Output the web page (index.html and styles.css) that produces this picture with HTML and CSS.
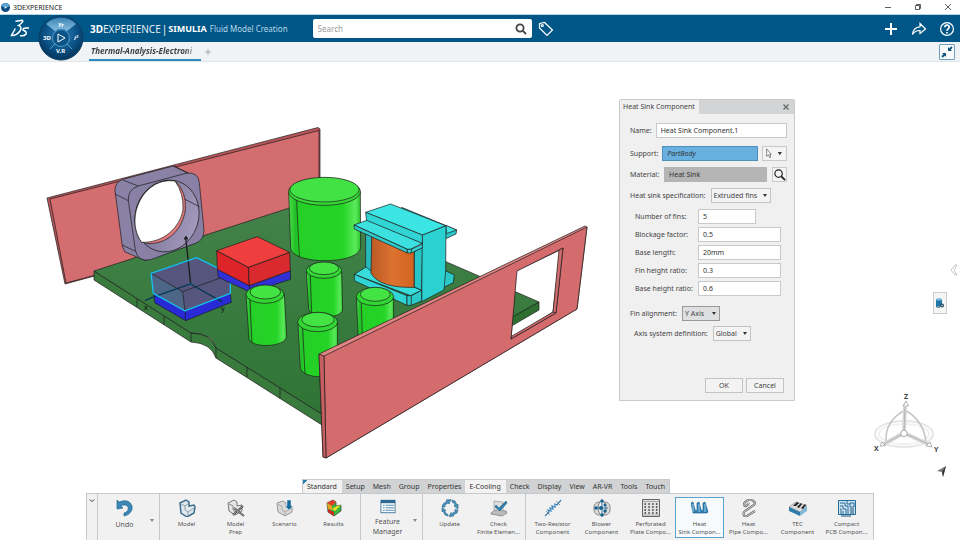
FILE: index.html
```html
<!DOCTYPE html>
<html lang="en">
<head>
    <meta charset="UTF-8">
    <meta name="viewport" content="width=device-width, initial-scale=1.0">
    <title>3DEXPERIENCE</title>
    <link rel="stylesheet" href="styles.css">
</head>
<body>
    <header class="titlebar">
        <svg class="app-icon" viewBox="0 0 10 10"><circle cx="5" cy="5" r="5" fill="#0b4d82"/><path d="M1 4a4 4 0 0 1 8 0L5 5z" fill="#5da7d6"/><path d="M4 3.5v3L7 5z" fill="#d5ecfa"/></svg>
        <span class="app-name">3DEXPERIENCE</span>
        <div class="window-buttons">
            <button aria-label="Minimize"><svg viewBox="0 0 8 8"><path d="M1 4.500h6"/></svg></button>
            <button aria-label="Restore"><svg viewBox="0 0 8 8"><path d="M1.500 2.500h4v4h-4zM2.500 2.500v-1h4v4h-1"/></svg></button>
            <button aria-label="Close"><svg viewBox="0 0 8 8"><path d="M1 1l6 6M7 1L1 7"/></svg></button>
        </div>
    </header>

    <nav class="topbar">
        <svg class="ds-logo" viewBox="0 0 20 20"><path d="M6 2.200L12 1.200Q14.500 2.500 8.500 6.500Q12.500 7.500 10 12Q6.500 16.700 1.500 16.500L5 10M18.500 9Q12.500 8.500 13 11Q17.500 13 16 15Q14.500 17.300 10.500 16.700" fill="none" stroke="#fff" stroke-width="1.500" stroke-linecap="round"/></svg>
        <div class="brand"><span><b>3D</b>EXPERIENCE</span><span class="bar">|</span><b class="product">SIMULIA</b></div>
        <div class="app-title">Fluid Model Creation</div>
        <div class="search">
            <input type="text" placeholder="Search" aria-label="Search">
            <button aria-label="Run search"><svg viewBox="0 0 12 12"><circle cx="5" cy="5" r="3.600"/><path d="M7.700 7.700L11 11"/></svg></button>
        </div>
        <button class="tag" aria-label="Tags"><svg viewBox="0 0 16 16"><path d="M1.500 2.500l5-1L14.500 9 9 14.500 1.500 7z"/><circle cx="4.300" cy="4.500" r="1"/></svg></button>
        <div class="actions">
            <button aria-label="Add"><svg viewBox="0 0 16 16"><path d="M8 2v12M2 8h12" stroke-width="2"/></svg></button>
            <button aria-label="Share"><svg viewBox="0 0 16 16"><path d="M1.500 13.500C2 8.500 4.500 6 9 5.800V2.500L14.500 8 9 12.500V9.500C6 9.300 3.500 10.500 1.500 13.500z"/></svg></button>
            <button aria-label="Help"><svg viewBox="0 0 16 16"><circle cx="8" cy="8" r="6.400"/><path d="M5.800 6.300c.2-3 4.600-2.700 4.400 0C10 8 8 7.800 8 9.800M8 11v1.500" stroke-width="1.700"/></svg></button>
        </div>
        <button class="compass" aria-label="Compass">
            <svg viewBox="0 0 46 46">
                <defs>
                    <radialGradient id="ball" cx=".5" cy=".4" r=".6"><stop offset="0" stop-color="#2b7fb5"/><stop offset=".6" stop-color="#0c5389"/><stop offset="1" stop-color="#043459"/></radialGradient>
                    <linearGradient id="gloss" x1="0" y1="0" x2="0" y2="1"><stop offset="0" stop-color="#3c84b4"/><stop offset="1" stop-color="#85bfe0"/></linearGradient>
                </defs>
                <circle cx="23" cy="23" r="22" fill="url(#ball)" stroke="#0a3e66"/>
                <path d="M8 9A21 21 0 0 1 38 9L29 16a9 9 0 0 0-12 0z" fill="url(#gloss)"/>
                <path d="M12 34l5-5M34 34l-5-5" stroke="#5ba0cb"/>
                <circle cx="23" cy="23" r="8.500" fill="#0c5488" stroke="#5199c6"/>
                <path d="M20 19v8l7-4z" fill="none" stroke="#fff"/>
                <text x="5" y="25">3D</text><text x="20" y="12" class="slant">Yr</text><text x="36" y="25" class="slant">i²</text><text x="18" y="38">V.R</text>
            </svg>
        </button>
    </nav>

    <div class="doc-tabs">
        <a class="doc-tab" href="#">Thermal-Analysis-Electroni</a>
        <button class="new-tab" aria-label="New tab"><svg viewBox="0 0 8 8"><path d="M4 1v6M1 4h6" stroke="#aaa"/></svg></button>
        <button class="collapse" aria-label="Collapse"><svg viewBox="0 0 14 14"><path d="M8 2v4h4zM2 8h4v4z" fill="#15547f"/><path d="M12 2L9 5M2 12l3-3" stroke="#15547f" stroke-width="1.800"/></svg></button>
    </div>

    <main class="workspace">
        <svg class="scene" viewBox="0 62 960 478" preserveAspectRatio="xMinYMin meet" role="img" aria-label="Electronics board">
            <defs>
                <linearGradient id="can"><stop offset="0" stop-color="#4be04a"/><stop offset=".1" stop-color="#21bd25"/><stop offset=".14" stop-color="#25cf27"/><stop offset=".75" stop-color="#24d426"/><stop offset=".93" stop-color="#5ae95a"/><stop offset="1" stop-color="#27c42b"/></linearGradient>
                <linearGradient id="board" x1="0" y1="0" x2="0" y2="1"><stop offset="0" stop-color="#43824a"/><stop offset="1" stop-color="#2f7435"/></linearGradient>
                <linearGradient id="bore"><stop offset="0" stop-color="#746d91"/><stop offset="1" stop-color="#a29abc"/></linearGradient>
                <linearGradient id="coil"><stop offset="0" stop-color="#bb5a25"/><stop offset=".5" stop-color="#dc7230"/><stop offset="1" stop-color="#d36220"/></linearGradient>
            </defs>

            <!-- rear wall -->
            <g class="edge">
                <path d="M47 198L318 127.500 320 129V215L65 284z" fill="#b95559"/>
                <path d="M50 199L319 130.500V215L66 283z" fill="#d46d6f"/>
            </g>

            <!-- board -->
            <g class="edge">
                <path d="M94 271L191 333Q211 333 216 348L322 414V425L216 358Q211 343 191 342L94 280z" fill="#397a3d"/>
                <path d="M539 302V310L450 362V350z" fill="#2f6f32"/>
                <path d="M94 271L308 202 539 302 340 414H322L216 348Q213 333 191 333z" fill="url(#board)"/>
                <path d="M137 299v8M164 316v9M191 333v9M216 348v10M247 367v10M280 388v11" fill="none"/>
            </g>

            <!-- fan -->
            <g class="edge detail" transform="translate(30 110) scale(.3333)">
                <path d="M255 242Q254 218 278 208L430 168 476 189 500 398 345 452 284 425 277 408z" fill="#8982a6"/>
                <path d="M295 272Q292 240 325 228L468 190Q505 184 508 218L522 360Q522 390 497 400L362 449Q323 457 316 420z" fill="#8881a5"/>
                <ellipse cx="411" cy="318" rx="95" ry="109" transform="rotate(18 411 318)" fill="url(#bore)"/>
                <path d="M335 397C300 350 312 275 360 234Q393 207 435 213Q471 245 466 300C458 354 420 400 358 401z" fill="#e17a7c"/>
                <path d="M335 397C300 350 312 275 360 234Q393 207 435 213Q462 250 459 300C449 354 400 399 335 397z" fill="#fff"/>
                <path d="M278 210L325 228M430 168L472 189M255 252L295 272M277 405L316 424M465 268L508 290" fill="none"/>
            </g>

            <!-- selected chip -->
            <g class="edge detail" transform="translate(30 110) scale(.3333)">
                <path d="M371 550L465 603 601 550 604 577 467 632 374 578z" fill="#2929d5"/>
                <path d="M466 603V632" fill="none"/>
                <path d="M363 490L500 443 601 493V550L465 603 370 550z" fill="#56557d"/>
                <path d="M363 490L458 545 465 603 370 550z" fill="#4d6687" stroke="none"/>
                <path d="M363 490L458 545 601 493M458 545L465 603" fill="none"/>
                <path d="M482 522L367 562 345 572M482 522L575 575M568 568l8 8" fill="none" stroke-width="4" stroke="#063755"/>
                <path d="M482 522L467 380M463 388l5-8 5 8" fill="none" stroke-width="4"/>
                <circle cx="482" cy="522" r="4" fill="#0b5272" stroke="none"/>
                <path d="M363 490L500 443 601 493V550L465 603 370 550z" fill="none" stroke="#16c3f4" stroke-width="4"/>
            </g>
            <text class="axis-name" x="144" y="310">x</text>
            <text class="axis-name" x="221" y="311">y</text>

            <g class="edge detail" transform="translate(220 160) scale(.3333)">
                <!-- red chip -->
                <path d="M-8 325L88 377 211 332 212 358 92 397-5 352z" fill="#3030d6"/>
                <path d="M-10 272L85 322 88 377-8 328z" fill="#dc2429"/>
                <path d="M85 322L209 277 211 332 88 377z" fill="#d92b2f"/>
                <path d="M-10 272L112 230 209 277 85 322z" fill="#ee3f3e"/>
                <path d="M88 377L92 397" fill="none"/>
                <!-- large capacitor -->
                <path d="M206 96L212 265C218 315 415 315 422 263L421 96z" fill="url(#can)"/>
                <ellipse cx="313.500" cy="95" rx="108" ry="41" fill="#35d936"/>
                <ellipse cx="313.500" cy="89" rx="104" ry="37" fill="#43e244"/>
                <path d="M230 122L238 290" fill="none"/>
                <!-- transformer -->
                <path d="M545 142L710 210 708 222 680 235 600 200z" fill="#2ccaca"/>
                <path d="M677 196L710 210 680 221z" fill="#44e4e2"/>
                <path d="M678 333L703 345 700 368 660 388 660 350z" fill="#2cc9c9"/>
                <path d="M403 343L440 320 605 391 572 407z" fill="#37dcdb"/>
                <path d="M437 222L460 230V338L437 320z" fill="#27b9bb"/>
                <path d="M455 228L583 275V382Q480 385 453 340z" fill="url(#coil)"/>
                <path d="M583 275L608 262 605 391 583 381z" fill="#27c5c5"/>
                <path d="M607 225L678 197 677 335 672 390 605 425z" fill="#2bd1d1"/>
                <path d="M403 343L561 407V436L403 362z" fill="#32d5d5"/>
                <path d="M561 407H574L605 391V423L574 436H561zM574 407V436" fill="#2cc9c9"/>
                <path d="M437 157L512 132 677 197 607 225z" fill="#3be5e3"/>
                <path d="M437 157L607 225V251L440 183z" fill="#31d4d4"/>
                <path d="M402 195L440 181 607 250 572 268H562z" fill="#3be0df"/>
                <path d="M402 195L562 268V279L403 207z" fill="#2ecaca"/>
                <path d="M562 268H574L607 252V263L574 279H562zM574 268V279" fill="#34d3d3"/>
                <!-- small capacitors -->
                <path d="M259 335L266 448C275 478 360 478 368 450L365 335z" fill="url(#can)"/>
                <ellipse cx="312" cy="331" rx="53" ry="24" fill="#31d833"/>
                <ellipse cx="312" cy="325" rx="44" ry="19" fill="#43e344"/>
                <path d="M271 346L275 462" fill="none"/>
                <path d="M409 412L415 535H521V412z" fill="url(#can)"/>
                <ellipse cx="465" cy="410" rx="56" ry="27" fill="#31d833"/>
                <ellipse cx="466" cy="403" rx="45" ry="21" fill="#43e344"/>
                <path d="M424 430L427 530" fill="none"/>
                <path d="M78 402L87 538C98 565 193 563 200 530L193 402z" fill="url(#can)"/>
                <ellipse cx="135" cy="403" rx="57" ry="27" fill="#31d833"/>
                <ellipse cx="136" cy="396" rx="46" ry="21" fill="#43e344"/>
                <path d="M90 418L96 549" fill="none"/>
                <path d="M234 488L241 625C250 657 342 660 353 625V488z" fill="url(#can)"/>
                <ellipse cx="293" cy="486" rx="60" ry="29" fill="#31d833"/>
                <ellipse cx="294" cy="479" rx="49" ry="22" fill="#43e344"/>
                <path d="M248 505L255 642" fill="none"/>
            </g>

            <!-- front wall with cut-out -->
            <g class="edge">
                <path d="M319 354L585 226 587 227 577 309 326 458 323 457zM516 271L511 339 553 312 560 250z" fill="#e08484" fill-rule="evenodd"/>
                <path d="M324 356L587 227 577 309 326 458zM517 271L511 339 556 313 563 248z" fill="#d46b6d" fill-rule="evenodd"/>
                <path d="M319 354L324 356 326 458 323 457z" fill="#c65f62"/>
                <path d="M559 250L563 248 556 313 511 339 512 336 553 312z" fill="#cf6a6d"/>
                <path d="M553 312L556 313" fill="none"/>
            </g>
        </svg>

        <section class="dialog" aria-labelledby="dialog-title">
            <div class="dialog-head">
                <h2 id="dialog-title">Heat Sink Component</h2>
                <button class="close" aria-label="Close dialog"><svg viewBox="0 0 8 8"><path d="M1.500 1.500l5 5M6.500 1.500l-5 5"/></svg></button>
            </div>
            <form class="dialog-body">
                <div class="row name">
                    <label for="name">Name:</label>
                    <input id="name" type="text" value="Heat Sink Component.1">
                </div>
                <div class="row support">
                    <label for="support">Support:</label>
                    <input id="support" type="text" value="PartBody" readonly>
                    <button type="button" class="pick" aria-label="Pick support"><svg viewBox="0 0 25 14"><path d="M4 2v8l2-1.500 1.200 3 1.300-.6L7.300 8H9z" fill="#fff" stroke="#444" stroke-width=".7"/><path d="M16 5.500h4.500l-2.200 3.500z" fill="#333"/></svg></button>
                </div>
                <div class="row material">
                    <label for="material">Material:</label>
                    <input id="material" type="text" value="Heat Sink" readonly>
                    <button type="button" class="browse" aria-label="Browse materials"><svg viewBox="0 0 14 14"><circle cx="6" cy="6" r="4"/><path d="M9 9l4 4" stroke-width="2"/></svg></button>
                </div>
                <div class="row">
                    <label for="spec">Heat sink specification:</label>
                    <span class="select wide"><select id="spec"><option>Extruded fins</option></select></span>
                </div>
                <div class="params">
                    <label for="fins">Number of fins:</label>
                    <input id="fins" class="short" type="text" value="5">
                    <label for="blockage">Blockage factor:</label>
                    <input id="blockage" type="text" value="0.5">
                    <label for="length">Base length:</label>
                    <input id="length" type="text" value="20mm">
                    <label for="fin-ratio">Fin height ratio:</label>
                    <input id="fin-ratio" type="text" value="0.3">
                    <label for="base-ratio">Base height ratio:</label>
                    <input id="base-ratio" type="text" value="0.6">
                </div>
                <div class="row alignment">
                    <label for="align">Fin alignment:</label>
                    <span class="select"><select id="align"><option>Y Axis</option></select></span>
                </div>
                <div class="row axis-system">
                    <label for="axis">Axis system definition:</label>
                    <span class="select"><select id="axis"><option>Global</option></select></span>
                </div>
                <div class="dialog-buttons">
                    <button type="button">OK</button>
                    <button type="button">Cancel</button>
                </div>
            </form>
        </section>

        <button class="side-arrow" aria-label="Show panel"><svg viewBox="0 0 8 12"><path d="M5 1L1 6l4 5h2L4 6l3-5z" fill="#fff" stroke="#aaa" stroke-width=".7"/></svg></button>
        <button class="side-tool" aria-label="Data"><svg viewBox="0 0 10 12"><path d="M1 2.500h6v7H1z" fill="#2377a8"/><ellipse cx="4" cy="2.500" rx="3" ry="1.200" fill="#72b6dc"/><path d="M1 9.500q3 1.500 4 .5" stroke="#17577f" fill="none"/><circle cx="7" cy="8.500" r="2" fill="#24495f"/><circle cx="7" cy="8.500" r=".7" fill="#fff"/></svg></button>

        <svg class="triad" viewBox="870 390 80 92" role="img" aria-label="View orientation">
            <g fill="none" stroke="#e6e6e6" stroke-width="2">
                <ellipse cx="904" cy="434" rx="29" ry="13"/>
                <ellipse cx="904" cy="434" rx="25" ry="10" stroke="#f1f1f1"/>
            </g>
            <path d="M886 441Q885 421 905 410Q924 421 926 442" fill="none" stroke="#c4c4c4" stroke-width="1.500"/>
            <g stroke="#d8d8d8" stroke-width="4"><path d="M905 407L904 433M884 444L904 433L928 444" fill="none"/></g>
            <path d="M905 407L904 433M884 444L904 433L928 444" fill="none" stroke="#b4b4b4"/>
            <g fill="#fff" stroke="#999" stroke-width=".8"><path d="M906 401l-3 5h5.500zM880 446l2-4 3.500 3.500zM932 447l-2-5-4 4z"/><circle cx="904" cy="433.500" r="3.200"/></g>
            <path d="M946 466l-9 5 5 1 1 5z" fill="#777"/><path d="M946 466l-4 6 1 5z" fill="#333"/>
            <text x="904" y="399">Z</text><text x="874" y="451">X</text><text x="934" y="452">Y</text>
        </svg>

        <div class="action-bar">
            <div class="sections">
                <button class="active first">Standard</button><button>Setup</button><button>Mesh</button><button>Group</button><button>Properties</button><button class="active">E-Cooling</button><button>Check</button><button>Display</button><button>View</button><button>AR-VR</button><button>Tools</button><button>Touch</button>
            </div>
            <div class="tools">
                <button class="handle" aria-label="Hide action bar"><svg viewBox="0 0 8 8"><path d="M1.500 2.500L4 4.500l2.500-2" fill="none" stroke="#555"/></svg></button>
                <div class="group">
                    <button class="tool large"><svg viewBox="0 0 18 18"><path d="M1 1l2 2q10-4 13 4c1 5-3 9-8 10v-3c5-1 6-7 1-8-2 0-3 0-4 1l2 2-6 1z" fill="#3a88b7" stroke="#27648b" stroke-width=".7"/></svg><span>Undo</span></button>
                    <button class="more" aria-label="More undo actions"></button>
                </div>
                <div class="group">
                    <button class="tool"><svg viewBox="0 0 18 18"><path d="M2 4l6-3 3 2v4l5-1 1 2-1 6-7 4-6-4z" fill="#e1e7eb" stroke="#3c6f8f" stroke-width="1.500"/><path d="M3 5l4 2v4l3 2 6-4M7 7l4-3M10 13v4" fill="none" stroke="#78909e" stroke-width=".8"/></svg><span>Model</span></button>
                    <button class="tool"><svg viewBox="0 0 18 18"><path d="M1 4l6-3 3 2v4l5-1v6l-7 4-6-4z" fill="#e5e5e5" stroke="#777"/><path d="M2 5l4 2v4l3 2 6-4" fill="none" stroke="#888"/><path d="M7 9l10 8M16 7L6 16" stroke="#444" stroke-width="2"/><path d="M7 9l10 8M16 7L6 16" stroke="#a7b5bd" stroke-width=".8"/></svg><span>Model<br>Prep</span></button>
                    <button class="tool"><svg viewBox="0 0 18 18"><path d="M1 4l6-2 3 2v4l6-1v6l-7 4-7-4z" fill="#d9d9d9" stroke="#999"/><path d="M1 5l5 2v4l3 2 7-4M9 13v4" fill="none" stroke="#aaa"/><path d="M11 1h4v6h2l-4 4-4-4h2z" fill="#176c9d" stroke="#dcedf6" stroke-width=".5"/></svg><span>Scenario</span></button>
                    <button class="tool"><svg viewBox="0 0 18 18"><path d="M2 4l6-3 3 2v4l5-1v6l-7 5-6-4z" fill="#38b53c" stroke="#344" stroke-width=".7"/><path d="M2 4l6-3 3 2-4 4z" fill="#e5392a"/><path d="M2 4l5 3v4l-4-1z" fill="#e9a21f"/><path d="M3 10l6 3v4l-6-4z" fill="#ce2620"/><path d="M7 10l5-3 4-1-6 6z" fill="#efdd25"/></svg><span>Results</span></button>
                </div>
                <div class="group">
                    <button class="tool large"><svg viewBox="0 0 18 18"><path d="M0 1h18v16H0z" fill="#2c6a91"/><path d="M1 5h16v11H1z" fill="#f8fbfc"/><path d="M3 7.500h2M6 7.500h10M3 10.500h2M6 10.500h10M3 13.500h2M6 13.500h10" stroke="#397ba2"/></svg><span>Feature<br>Manager</span></button>
                    <button class="more" aria-label="More features"></button>
                </div>
                <div class="group">
                    <button class="tool"><svg viewBox="0 0 18 18"><g fill="#4892bb" stroke="#2b6587" stroke-width=".6"><path d="M1 8l1-3 4-3-1-1 5-.5L8 5 7 4 4 6v2z"/><path d="M11 1l3 1 2 4 1-1v5l-4-3 1-1-1-2-2-1z"/><path d="M17 11l-1 3-4 2 1 1-5 .5 2-4 1 1 3-2v-2z"/><path d="M7 17l-3-1-2-4-1 1V8.500l4 3-1 1 1 2 2 1z"/></g></svg><span>Update</span></button>
                    <button class="tool"><svg viewBox="0 0 18 18"><path d="M1 14l4-3 11 1 1 2-5 3-11-2z" fill="#bcbcbc" stroke="#777" stroke-width=".7"/><path d="M4 2l9 1v9l-9-1z" fill="#ddd" stroke="#999" stroke-width=".7"/><path d="M6 6l3 3 7-7 1 2-7 8-5-4z" fill="#2e80b2" stroke="#195275" stroke-width=".5"/></svg><span>Check<br>Finite Elemen...</span></button>
                </div>
                <div class="group">
                    <button class="tool"><svg viewBox="0 0 18 18"><path d="M1 17l4-4-1-2 3 1-1-3 3 1-1-3 3 1 0-3 2 1 4-5" fill="none" stroke="#3b8abb" stroke-width="1.300"/><path d="M2 12l4 4M12 2l4 4" stroke="#777" stroke-width=".8"/></svg><span>Two-Resistor<br>Component</span></button>
                    <button class="tool"><svg viewBox="0 0 18 18"><rect x="1" y="3" width="16" height="13" rx="5" fill="#ddd" stroke="#888"/><ellipse cx="9" cy="9" rx="4" ry="7" fill="#eee" stroke="#777"/><path d="M9 1v16M2 9h13" stroke="#347ba6"/><g fill="#166291"><circle cx="9" cy="2" r="1.700"/><circle cx="3" cy="9" r="1.700"/><circle cx="8" cy="9" r="2"/><circle cx="12" cy="12" r="1.700"/><circle cx="9" cy="16" r="1.700"/><circle cx="12" cy="6" r="1.500"/></g></svg><span>Blower<br>Component</span></button>
                    <button class="tool"><svg viewBox="0 0 18 18"><path d="M.500.500h17v17H.500z" fill="#e2e2e2" stroke="#666"/><path d="M1 2.500h16M1 16h16" stroke="#aaa"/><path d="M2.500 5h14M2.500 8h14M2.500 11h14M2.500 14h14" stroke="#333" stroke-width="1.500" stroke-dasharray="1.500 2.300"/></svg><span>Perforated<br>Plate Compo...</span></button>
                    <button class="tool selected"><svg viewBox="0 0 18 18"><path d="M0 4l2-1 2 8 2 1 0-8 2-1 2 8 2 1V4l2-1 3 10-1 1H2z" fill="#3084b8" stroke="#14547d" stroke-width=".6"/><path d="M2 5v8M8 5v8M14 5v8" stroke="#9ccbe6"/></svg><span>Heat<br>Sink Compon...</span></button>
                    <button class="tool"><svg viewBox="0 0 18 18"><g fill="none"><path d="M4 6C4 3 7 1 10 1c4 0 6 3 4 5L5 12c-3 3-1 6 2 5l8-5M4 6c1 2 3 1 5-2" stroke="#666" stroke-width="2.200"/><path d="M4 6C4 3 7 1 10 1c4 0 6 3 4 5L5 12c-3 3-1 6 2 5l8-5M4 6c1 2 3 1 5-2" stroke="#ddd" stroke-width=".9"/></g></svg><span>Heat<br>Pipe Compo...</span></button>
                    <button class="tool"><svg viewBox="0 0 18 18"><path d="M0 8l7-5 11 4-7 6z" fill="#ddd" stroke="#777" stroke-width=".6"/><path d="M0 8l11 5v4L0 12z" fill="#2b7cac"/><path d="M11 13l7-6v5l-7 5z" fill="#81b9d8"/><path d="M4 7l4-4 2 1-3 3zM8 8l4-4 1 1-3 4zM12 9l4-4 1 1-3 4z" fill="#222"/></svg><span>TEC<br>Component</span></button>
                    <button class="tool"><svg viewBox="0 0 18 18"><path d="M.500 1.500h17v14H.500z" fill="#cfe3ef" stroke="#236b98"/><path d="M2 4h5v3h3v8M2 7h3v3h3v5M2 10h1v5M5 12v3M9 2v3h3" fill="none" stroke="#236b98"/><path d="M12 4h4v4h-4z" fill="none" stroke="#236b98"/><path d="M12 10h4M12 12h4M12 14h4M3 17h10" stroke="#14547d"/></svg><span>Compact<br>PCB Compon...</span></button>
                </div>
            </div>
        </div>
    </main>
</body>
</html>
```
FILE: styles.css
```css
* {
    margin: 0;
    padding: 0;
    box-sizing: border-box;
    font-family: "Noto Sans", sans-serif;
}

body {
    display: flex;
    flex-direction: column;
    height: 100vh;
    overflow: hidden;
    background: #fff;
    color: #444;
    font-size: 7px;
}

button {
    border: none;
    background: none;
    color: inherit;
    font-size: inherit;
}

button svg {
    display: block;
}

/* window title */
.titlebar {
    display: flex;
    align-items: center;
    height: 14px;
    padding: 0 8px 0 1px;
    gap: 3px;
    color: #222;
}

.app-icon {
    width: 9px;
    height: 9px;
}

.window-buttons {
    display: flex;
    gap: 22px;
    margin-left: auto;
}

.window-buttons svg,
.close svg {
    width: 8px;
    height: 8px;
    fill: none;
    stroke: #333;
    stroke-width: 0.8;
}

/* top bar */
.topbar {
    position: relative;
    display: flex;
    align-items: center;
    height: 28px;
    padding: 0 5px 0 10px;
    border-top: 1px solid #b5d3e3;
    background: #005686;
    color: #fff;
}

.ds-logo {
    width: 20px;
    height: 20px;
}

.brand {
    display: flex;
    align-items: center;
    gap: 1px;
    margin-left: 60px;
    font-size: 10px;
    color: #e2eef5;
    white-space: nowrap;
}

.brand b,
.brand .bar {
    color: #fff;
}

.brand .product {
    font-size: 9px;
}

.app-title {
    margin-left: 3px;
    font-size: 8px;
    color: #b9d9eb;
    white-space: nowrap;
}

.search {
    display: flex;
    align-items: center;
    width: 219px;
    height: 19px;
    margin-left: 25px;
    padding: 0 5px;
    border-radius: 2px;
    background: #fff;
}

.search input {
    flex: 1;
    min-width: 0;
    border: none;
    outline: none;
    font-size: 8px;
}

.search input::placeholder {
    color: #999;
}

.search svg {
    width: 12px;
    height: 12px;
    fill: none;
    stroke: #444;
    stroke-width: 1.8;
}

.tag {
    margin-left: 6px;
}

.tag svg,
.actions svg {
    width: 16px;
    height: 16px;
    fill: none;
    stroke: #fff;
    stroke-width: 1.2;
}

.actions {
    display: flex;
    gap: 12px;
    margin-left: auto;
}

.compass {
    position: absolute;
    left: 38px;
    top: 0;
    z-index: 2;
}

.compass svg {
    width: 46px;
    height: 46px;
}

.compass text {
    fill: #fff;
    font-size: 6px;
    font-weight: bold;
}

.compass .slant {
    font-style: italic;
}

/* document tabs */
.doc-tabs {
    display: flex;
    align-items: center;
    height: 20px;
    padding: 0 5px 0 89px;
    border-bottom: 1px solid #e1e5e8;
    background: #eff3f5;
}

.doc-tab {
    width: 112px;
    height: 19px;
    padding-left: 2px;
    overflow: hidden;
    border-bottom: 2px solid #2e8cc5;
    background: linear-gradient(90deg, #3c3c3c 86%, #c8ccce 94%);
    background-clip: text;
    color: transparent;
    font-size: 8px;
    font-style: italic;
    font-weight: bold;
    line-height: 18px;
    text-decoration: none;
    white-space: nowrap;
}

.new-tab {
    margin-left: 3px;
}

.new-tab svg {
    width: 8px;
    height: 8px;
}

.collapse {
    margin-left: auto;
    border: 1px solid #6f9fbd;
    border-radius: 1px;
    background: #f8fbfc;
}

.collapse svg {
    width: 14px;
    height: 14px;
}

/* 3D view */
.workspace {
    position: relative;
    flex: 1;
    display: flex;
    flex-direction: column;
    justify-content: flex-end;
    align-items: center;
    min-height: 0;
}

.scene {
    position: absolute;
    inset: 0;
    width: 100%;
    height: 100%;
}

.edge {
    stroke: #1c1c1c;
    stroke-width: 0.7;
    stroke-linejoin: round;
}

.detail {
    stroke-width: 2.1;
}

.axis-name {
    fill: #111;
    font-size: 7px;
}

/* heat sink dialog */
.dialog {
    position: absolute;
    top: 37px;
    right: 165px;
    width: 176px;
    border: 1px solid #c6c8c9;
    border-radius: 2px 2px 0 0;
    background: #f0f0f0;
}

.dialog-head {
    display: flex;
    justify-content: space-between;
    height: 14px;
    background: #d2d4d5;
}

.dialog-head h2 {
    padding: 0 4px 0 3px;
    background: #f0f0f0;
    font-size: 7px;
    font-weight: normal;
    line-height: 14px;
}

.close {
    padding: 0 4px;
}

.close svg {
    stroke: #666;
    stroke-width: 1.2;
}

.dialog-body {
    padding: 9px 7px 7px 10px;
}

.row {
    display: flex;
    align-items: center;
    gap: 5px;
    height: 15px;
    margin-bottom: 6px;
}

.dialog label {
    white-space: nowrap;
}

.dialog input {
    flex: 1;
    min-width: 0;
    height: 15px;
    padding: 0 4px;
    border: 1px solid #c9c9c9;
    outline: none;
    background: #fff;
    color: #333;
    font-size: 7px;
}

.row.name {
    gap: 4px;
    margin-bottom: 8px;
}

.row.support {
    gap: 4px;
}

.row.support input {
    border-color: #4f8fb8;
    background: #68b0df;
    font-style: italic;
}

.row.material input {
    border-color: #b5b5b5;
    background: #b5b5b5;
}

.pick,
.browse {
    border: 1px solid #c9c9c9;
    background: #f4f4f4;
}

.pick svg {
    width: 23px;
    height: 13px;
}

.browse svg {
    width: 13px;
    height: 13px;
    fill: none;
    stroke: #222;
    stroke-width: 1.3;
}

.select {
    position: relative;
    width: 38px;
}

.select.wide {
    width: 60px;
}

.select select {
    display: block;
    width: 100%;
    height: 15px;
    padding: 0 2px;
    appearance: none;
    border: 1px solid #c4c4c4;
    border-radius: 0;
    background: #f3f3f3;
    color: #444;
    font-size: 7px;
}

.select::after {
    content: "";
    position: absolute;
    top: 6px;
    right: 4px;
    border: 2px solid transparent;
    border-top: 3px solid #333;
    border-bottom: none;
}

.params {
    display: grid;
    grid-template-columns: 59px 1fr;
    gap: 3px 4px;
    align-items: center;
    padding: 0 6px 0 5px;
    margin-bottom: 10px;
}

.params .short {
    width: 70%;
}

.alignment {
    margin-bottom: 5px;
}

.alignment .select select {
    border: 1px solid #999;
    background: #dedfe0;
}

.axis-system {
    padding-left: 4px;
}

.dialog-buttons {
    display: flex;
    justify-content: flex-end;
    gap: 3px;
    padding-right: 3px;
    margin-top: 37px;
}

.dialog-buttons button {
    width: 38px;
    height: 15px;
    border: 1px solid #c4c4c4;
    background: #f3f3f3;
}

/* right edge of the view */
.side-arrow {
    position: absolute;
    top: 202px;
    right: 2px;
}

.side-arrow svg {
    width: 8px;
    height: 12px;
}

.side-tool {
    position: absolute;
    top: 230px;
    right: 13px;
    padding: 4px 1px;
    border: 1px solid #ccc;
    background: #f5f5f5;
}

.side-tool svg {
    width: 10px;
    height: 12px;
}

.triad {
    position: absolute;
    right: 10px;
    bottom: 58px;
    width: 80px;
    height: 92px;
}

.triad text {
    fill: #444;
    font-size: 7px;
    font-weight: bold;
}

/* action bar */
.action-bar {
    position: relative;
    display: flex;
    flex-direction: column;
    align-items: center;
}

.sections {
    display: flex;
    height: 14px;
    margin-left: 12px;
    border: 1px solid #c6c8c9;
    border-bottom: none;
    background: #d0d2d3;
}

.sections button {
    padding: 0 4px;
    line-height: 13px;
    color: #333;
}

.sections .active {
    padding: 0 5px 0 4px;
    background: #f2f2f2;
}

.sections .first {
    background: linear-gradient(135deg, #2e80b2 3px, #f2f2f2 3px);
}

.tools {
    display: flex;
    height: 47px;
    border: 1px solid #c6c8c9;
    border-bottom: none;
    background: #f1f1f1;
}

.handle {
    display: flex;
    width: 10px;
    padding: 3px 1px;
}

.handle svg {
    width: 8px;
    height: 8px;
}

.group {
    display: flex;
    padding: 3px 2px 2px;
    border-left: 1px solid #c6c8c9;
}

.tool {
    display: flex;
    flex-direction: column;
    align-items: center;
    justify-content: flex-start;
    gap: 3px;
    width: 49px;
    padding-top: 1px;
    border: 1px solid transparent;
    color: #555;
    font-size: 6px;
    line-height: 8px;
    text-align: center;
    white-space: nowrap;
}

.tool svg {
    width: 18px;
    height: 18px;
}

.tool.large {
    font-size: 7px;
    line-height: 10px;
}

.tool.selected {
    border-color: #5ba3cc;
    background: #f6fafc;
}

.more {
    width: 8px;
}

.more::before {
    content: "";
    display: block;
    margin: 5px 0 0 1px;
    width: 0;
    border: 2px solid transparent;
    border-top: 3px solid #888;
    border-bottom: none;
}
```
